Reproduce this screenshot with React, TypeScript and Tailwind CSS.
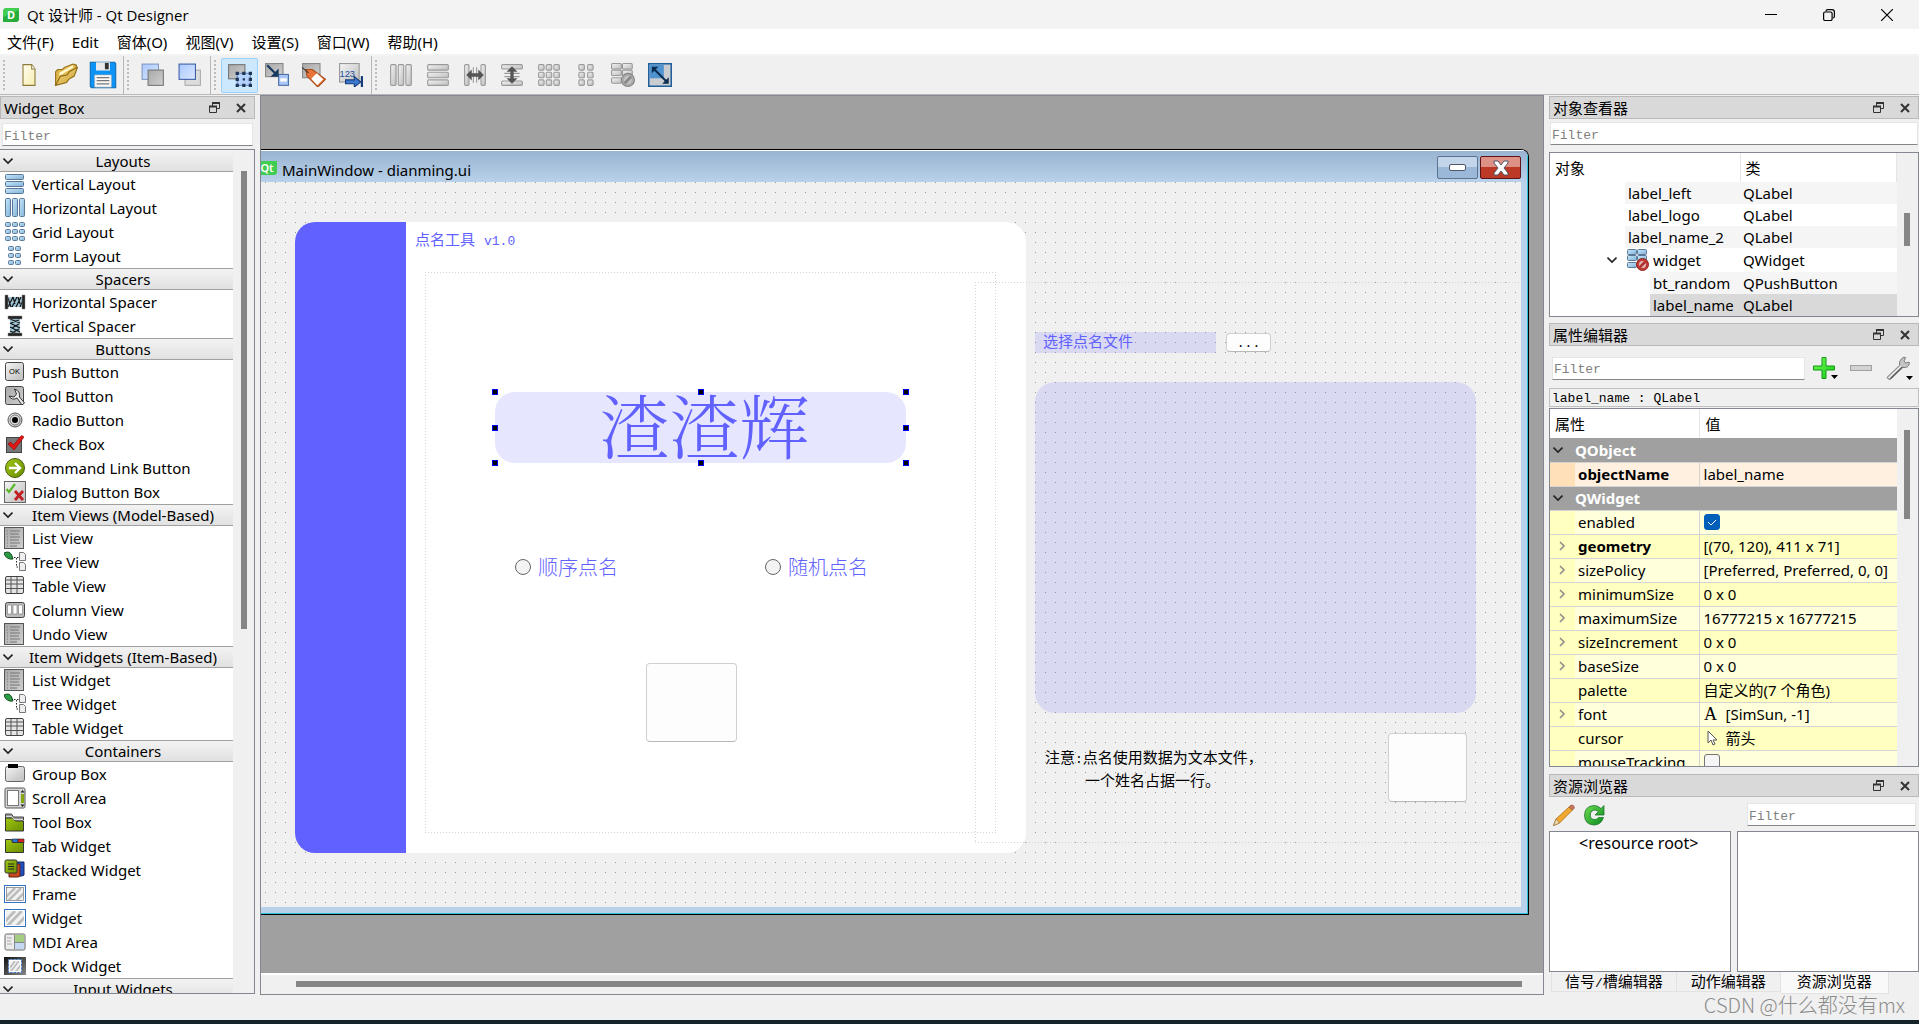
import { ReactNode } from "react";
import clsx from "clsx";

interface WidgetGroup {
  title: string;
  items: [icon: string, label: string][];
}

interface Property {
  name: string;
  value?: ReactNode;
  bold?: boolean;
  expandable?: boolean;
  tone: "header" | "object" | "light" | "dark";
}

const MONO = "font-['Liberation_Mono','Noto_Sans_CJK_SC',monospace]";

const menus = ["文件(F)", "Edit", "窗体(O)", "视图(V)", "设置(S)", "窗口(W)", "帮助(H)"];

const toolGroups: [icon: string, label: string][][] = [
  [["new", "New"], ["open", "Open"], ["save", "Save"]],
  [["lower", "Send to back"], ["raise", "Bring to front"]],
  [["editWidgets", "Edit widgets"], ["editSignals", "Edit signals"], ["editBuddies", "Edit buddies"], ["editTabs", "Edit tab order"]],
  [
    ["hGray", "Lay out horizontally"],
    ["vGray", "Lay out vertically"],
    ["hSplit", "Horizontal splitter"],
    ["vSplit", "Vertical splitter"],
    ["gridGray", "Lay out in a grid"],
    ["formGray", "Lay out in a form"],
    ["breakGray", "Break layout"],
    ["adjust", "Adjust size"],
  ],
];

const widgetGroups: WidgetGroup[] = [
  { title: "Layouts", items: [["vertical", "Vertical Layout"], ["horizontal", "Horizontal Layout"], ["grid", "Grid Layout"], ["form", "Form Layout"]] },
  { title: "Spacers", items: [["hSpacer", "Horizontal Spacer"], ["vSpacer", "Vertical Spacer"]] },
  {
    title: "Buttons",
    items: [
      ["push", "Push Button"],
      ["tool", "Tool Button"],
      ["radio", "Radio Button"],
      ["check", "Check Box"],
      ["command", "Command Link Button"],
      ["dialog", "Dialog Button Box"],
    ],
  },
  {
    title: "Item Views (Model-Based)",
    items: [["list", "List View"], ["tree", "Tree View"], ["table", "Table View"], ["column", "Column View"], ["list", "Undo View"]],
  },
  { title: "Item Widgets (Item-Based)", items: [["list", "List Widget"], ["tree", "Tree Widget"], ["table", "Table Widget"]] },
  {
    title: "Containers",
    items: [
      ["group", "Group Box"],
      ["scroll", "Scroll Area"],
      ["toolbox", "Tool Box"],
      ["tab", "Tab Widget"],
      ["stacked", "Stacked Widget"],
      ["frame", "Frame"],
      ["widget", "Widget"],
      ["mdi", "MDI Area"],
      ["dock", "Dock Widget"],
    ],
  },
  { title: "Input Widgets", items: [] },
];

const properties: Property[] = [
  { name: "QObject", tone: "header" },
  { name: "objectName", value: "label_name", bold: true, tone: "object" },
  { name: "QWidget", tone: "header" },
  { name: "enabled", value: <CheckBox label="enabled" checked />, tone: "light" },
  { name: "geometry", value: "[(70, 120), 411 x 71]", bold: true, expandable: true, tone: "dark" },
  { name: "sizePolicy", value: "[Preferred, Preferred, 0, 0]", expandable: true, tone: "light" },
  { name: "minimumSize", value: "0 x 0", expandable: true, tone: "dark" },
  { name: "maximumSize", value: "16777215 x 16777215", expandable: true, tone: "light" },
  { name: "sizeIncrement", value: "0 x 0", expandable: true, tone: "dark" },
  { name: "baseSize", value: "0 x 0", expandable: true, tone: "light" },
  { name: "palette", value: "自定义的(7 个角色)", tone: "dark" },
  {
    name: "font",
    value: (
      <span className="flex items-center gap-2">
        <span className="w-[14px] text-center font-['Liberation_Serif',serif] text-lg leading-5">A</span>[SimSun, -1]
      </span>
    ),
    expandable: true,
    tone: "light",
  },
  {
    name: "cursor",
    value: (
      <span className="flex items-center gap-2">
        <svg viewBox="0 0 14 18" className="h-[18px] w-[14px]">
          <path d="M4 2v12l3-3 2 5 2-1-2-4h4z" fill="#fff" stroke="#555" />
        </svg>
        箭头
      </span>
    ),
    tone: "dark",
  },
  { name: "mouseTracking", value: <CheckBox label="mouseTracking" />, tone: "light" },
];

export default function App() {
  return (
    <div className="relative flex h-screen flex-col overflow-hidden bg-[#f0f0f0] font-['Noto_Sans','Noto_Sans_CJK_SC',sans-serif] text-[15px] leading-5 text-black">
      <Gradients />
      <TitleBar />
      <nav className="flex h-[27px] shrink-0 items-center gap-[18px] border-b-2 border-[#f3f3f3] bg-white pl-[7px]">
        {menus.map((m) => (
          <button key={m} className="whitespace-nowrap">{m}</button>
        ))}
      </nav>
      <Toolbar />
      <main className="flex min-h-0 flex-1">
        <WidgetBox />
        <Workspace />
        <aside className="flex w-[370px] shrink-0 flex-col pb-px">
          <ObjectInspector />
          <PropertyEditor />
          <ResourceBrowser />
        </aside>
      </main>
      <footer className="h-[29px] shrink-0 border-b-4 border-[#15232b]" />
      <p className="absolute right-[14px] bottom-[5px] font-['Noto_Sans_CJK_SC',sans-serif] text-[20px] leading-7 font-light text-[#8c8c8c]">
        CSDN @什么都没有mx
      </p>
    </div>
  );
}

function TitleBar() {
  return (
    <header className="flex h-[29px] shrink-0 items-center bg-[#f3f3f3] pr-[3px] pl-[3px]">
      <svg viewBox="0 0 16 14" className="h-[14px] w-4">
        <path d="M2 0h14v12l-2 2H0V2z" fill="#41cd52" />
        <path d="M0 14V9l16-7v10l-2 2z" fill="#27ad3b" />
        <text x="8" y="11" fontSize="11" fontWeight="700" textAnchor="middle" fill="#fff">D</text>
      </svg>
      <h1 className="ml-2 flex-1 font-['Open_Sans','Noto_Sans_CJK_SC',sans-serif]">Qt 设计师 - Qt Designer</h1>
      <button aria-label="Minimize" className="flex w-[58px] justify-center">
        <svg viewBox="0 0 12 12" className="h-3 w-3"><path d="M0 5.500h12" stroke="#000" /></svg>
      </button>
      <button aria-label="Restore" className="flex w-[58px] justify-center">
        <svg viewBox="0 0 12 12" className="h-3 w-3" fill="none" stroke="#000" strokeWidth="1.200">
          <rect x="0.600" y="3" width="8.500" height="8.500" rx="1.500" />
          <path d="M3 2.600V2Q3.200.6 4.600.6H9Q11.400.6 11.400 3v4.500Q11.400 9 9.600 9" />
        </svg>
      </button>
      <button aria-label="Close" className="flex w-[58px] justify-center">
        <svg viewBox="0 0 12 12" className="h-3 w-3"><path d="M0 0l12 12M12 0L0 12" stroke="#000" strokeWidth="1.200" /></svg>
      </button>
    </header>
  );
}

function Toolbar() {
  return (
    <div className="flex h-[39px] shrink-0 border-b border-[#b8b8b8]">
      {toolGroups.map((group, i) => (
        <div key={i} className={clsx("flex items-center pr-[2px]", i < 3 && "border-r border-[#b8b8b8]")}>
          <span className="ml-[3px] h-[30px] w-0 border-l-2 border-dotted border-[#bdbdbd]" />
          <span className="w-[5px]" />
          {group.map(([icon, label]) => (
            <button
              key={icon}
              aria-label={label}
              className={clsx(
                "flex h-[35px] w-[37px] items-center justify-center rounded-xs border",
                icon === "editWidgets" ? "border-[#99d1ff] bg-[#cce8ff]" : "border-transparent",
              )}
            >
              <Icon name={icon} className={icon === "save" ? "h-7 w-7" : "h-6 w-6"} />
            </button>
          ))}
        </div>
      ))}
    </div>
  );
}

function WidgetBox() {
  return (
    <aside className="flex w-[260px] shrink-0 flex-col pr-[5px] pb-px">
      <DockTitle title="Widget Box" />
      <div className="px-[2px] pt-1 pb-[3px]">
        <Filter label="Filter widgets" />
      </div>
      <div className="flex min-h-0 flex-1 border-y border-r border-[#828790]">
        <div className="min-w-0 flex-1 overflow-hidden bg-white">
          {widgetGroups.map((group, i) => (
            <section key={group.title}>
              <button
                className={clsx(
                  "flex h-[22px] w-full items-center border-b border-[#a0a0a0] bg-linear-to-b from-[#f3f3f3] to-[#e1e1e1] pl-[3px]",
                  i > 0 && "border-t",
                )}
              >
                <Chevron />
                <span className="flex-1 text-center">{group.title}</span>
              </button>
              <ul>
                {group.items.map(([icon, label]) => (
                  <li key={label} className="flex h-6 items-center gap-[6px] pl-1">
                    <Icon name={icon} className="h-[22px] w-[22px]" />
                    {label}
                  </li>
                ))}
              </ul>
            </section>
          ))}
        </div>
        <div className="w-[21px] pt-[21px] pl-2">
          <div className="h-[458px] w-[6px] bg-[#868686]" />
        </div>
      </div>
    </aside>
  );
}

function Workspace() {
  return (
    <section className="mr-[5px] flex min-w-0 flex-1 flex-col border border-[#828790] bg-[#a0a0a0]">
      <div className="flex min-h-0 flex-1 pt-[53px] pr-[14px] pb-[58px]">
        <div className="flex flex-1 flex-col overflow-hidden rounded-tr-lg border-t border-r border-b border-black">
          <div className="flex min-h-0 flex-1 flex-col border-t border-r border-b border-t-white border-r-[#2cbfd8] border-b-[#2cbfd8] bg-[#b9d1ea]">
            <div className="flex h-[31px] shrink-0 items-center gap-[2px] bg-linear-to-b from-[#99b4d1] to-[#b9d1ea] pt-[2px] pr-[6px]">
              <svg viewBox="0 0 16 14" className="h-[14px] w-4">
                <path d="M0 0h16v12l-2 2H0z" fill="#41cd52" />
                <text x="6" y="11" fontSize="11" fontWeight="600" textAnchor="middle" fill="#fff">Qt</text>
              </svg>
              <h2 className="ml-[3px] flex-1 pt-1">MainWindow - dianming.ui</h2>
              <button aria-label="Minimize form" className="flex h-[23px] w-[41px] items-center justify-center rounded-xs border border-[#5b7290] bg-linear-to-b from-[#c3d5ea] from-50% to-[#9bb8d8] to-50%">
                <span className="h-[7px] w-[17px] rounded-xs border border-[#535666] bg-white" />
              </button>
              <button aria-label="Close form" className="flex h-[23px] w-[41px] items-center justify-center rounded-xs border border-[#5c1418] bg-linear-to-b from-[#dd9187] from-45% to-[#bc3a25] to-50%">
                <svg viewBox="0 0 18 16" className="h-4 w-[18px]">
                  <path d="M2 1h4l3 4 3-4h4v2l-4 5 4 5v2h-4l-3-4-3 4H2v-2l4-5-4-5z" fill="#fff" stroke="#535666" />
                </svg>
              </button>
            </div>
            <FormCanvas />
          </div>
        </div>
      </div>
      <div className="h-[21px] shrink-0 border-t-2 border-white bg-[#f0f0f0] pt-[6px] pr-[21px] pl-[35px]">
        <div className="h-[6px] bg-[#868686]" />
      </div>
    </section>
  );
}

// The form under edit: every child sits at its own geometry on a 10px grid.
function FormCanvas() {
  return (
    <div className="relative mr-[6px] mb-[6px] flex-1 overflow-hidden bg-[#f0f0f0] bg-[conic-gradient(from_270deg_at_1px_1px,#999_90deg,transparent_0)] bg-size-[10px_10px] bg-position-[4px_0px] text-[#6161ff]">
      <div className="absolute top-[40px] left-[34px] h-[631px] w-[731px] overflow-hidden rounded-[20px] bg-white">
        <div className="h-full w-[111px] bg-[#6161ff]" />
      </div>
      <p className={clsx("absolute top-[48px] left-[154px] leading-6", MONO)}>
        点名工具 <span className="text-[13px]">v1.0</span>
      </p>
      <Outline className="top-[90px] left-[164px] h-[561px] w-[571px]" />
      <Outline className="top-[100px] left-[714px] h-[561px] w-[600px]" />

      <div className="absolute top-[210px] left-[234px] flex h-[71px] w-[411px] items-center justify-center rounded-[20px] bg-[#6161ff]/16 pb-2 pl-2 font-['Noto_Serif_CJK_SC','Noto_Sans_CJK_SC',serif] text-[70px] leading-none font-light">
        渣渣辉
      </div>
      <div className="absolute top-[207px] left-[231px] grid h-[77px] w-[417px] grid-cols-3 content-between">
        {["justify-self-start", "justify-self-center", "justify-self-end"].map((side) => (
          <Handle key={side} className={side} />
        ))}
        <Handle className="justify-self-start" />
        <Handle className="col-start-3 justify-self-end" />
        {["justify-self-start", "justify-self-center", "justify-self-end"].map((side) => (
          <Handle key={side} className={side} />
        ))}
      </div>

      <RadioOption label="顺序点名" className="top-[373px] left-[254px]" />
      <RadioOption label="随机点名" className="top-[373px] left-[504px]" />
      <button aria-label="bt_random" className="absolute top-[481px] left-[385px] h-[79px] w-[91px] rounded-sm border border-[#d0d0d0] border-b-[#b8b8b8] bg-[#fdfdfd]" />

      <p className={clsx("absolute top-[150px] left-[774px] h-[21px] w-[181px] bg-[#6161ff]/16 pl-2 leading-6", MONO)}>选择点名文件</p>
      <button className={clsx("absolute top-[151px] left-[965px] h-[19px] w-[45px] rounded-sm border border-[#d0d0d0] border-b-[#b8b8b8] bg-[#fdfdfd] text-[13px] leading-5 text-black", MONO)}>
        ...
      </button>
      <div className="absolute top-[200px] left-[774px] h-[331px] w-[441px] rounded-[20px] bg-[#6161ff]/16" />
      <p className={clsx("absolute top-[566px] left-[784px] leading-[23px] text-black", MONO)}>
        注意<span className="text-[13px]">:</span>点名使用数据为文本文件，
        <span className="block pl-10">一个姓名占据一行。</span>
      </p>
      <button aria-label="bt_start" className="absolute top-[551px] left-[1127px] h-[69px] w-[79px] rounded-sm border border-[#d0d0d0] border-b-[#b8b8b8] bg-[#fdfdfd]" />
    </div>
  );
}

function Outline({ className }: { className: string }) {
  return (
    <div
      className={clsx(
        "absolute bg-[repeating-linear-gradient(90deg,#d4d4d4_0_1px,transparent_1px_3px),repeating-linear-gradient(90deg,#d4d4d4_0_1px,transparent_1px_3px),repeating-linear-gradient(180deg,#d4d4d4_0_1px,transparent_1px_3px),repeating-linear-gradient(180deg,#d4d4d4_0_1px,transparent_1px_3px)] bg-size-[100%_1px,100%_1px,1px_100%,1px_100%] bg-position-[top,bottom,left,right] bg-no-repeat",
        className,
      )}
    />
  );
}

function Handle({ className }: { className: string }) {
  return <span className={clsx("h-[6px] w-[6px] border border-[#0000ff] bg-black", className)} />;
}

function RadioOption({ label, className }: { label: string; className: string }) {
  return (
    <label className={clsx("absolute flex items-center gap-[7px] font-['Noto_Sans_CJK_SC',sans-serif] text-xl leading-6 font-light", className)}>
      <input type="radio" name="order" className="h-4 w-4 appearance-none rounded-full border border-[#666] bg-[#f3f3f3]" />
      {label}
    </label>
  );
}

function ObjectInspector() {
  const rows: [string, string, boolean][] = [
    ["label_left", "QLabel", true],
    ["label_logo", "QLabel", false],
    ["label_name_2", "QLabel", true],
  ];
  return (
    <section>
      <DockTitle title="对象查看器" />
      <div className="px-px pt-[3px] pb-[2px]">
        <Filter label="Filter objects" />
      </div>
      <div className="mt-[5px] flex h-[165px] overflow-hidden border border-[#828790] bg-white">
        <div className="min-w-0 flex-1">
          <table className="w-full table-fixed border-collapse text-left">
            <colgroup>
              <col className="w-[190px]" />
              <col />
            </colgroup>
            <thead>
              <tr className="h-[29px]">
                <th className="border-r border-[#e5e5e5] pl-[5px] font-normal">对象</th>
                <th className="border-r border-[#e5e5e5] pl-[5px] font-normal">类</th>
              </tr>
            </thead>
            <tbody>
              {rows.map(([name, cls, striped]) => (
                <tr key={name}>
                  <td className="p-0 pl-[75px]"><div className={clsx("h-[22px] pl-[3px] leading-[22px]", striped && "bg-[#f5f5f5]")}>{name}</div></td>
                  <td className={clsx("p-0 pl-[3px]", striped && "bg-[#f5f5f5]")}>{cls}</td>
                </tr>
              ))}
              <tr className="h-6">
                <td className="p-0">
                  <div className="flex items-center pl-[57px]">
                    <Chevron />
                    <Icon name="breakRed" className="mr-1 ml-[10px] h-[22px] w-[22px]" />
                    widget
                  </div>
                </td>
                <td className="p-0 pl-[3px]">QWidget</td>
              </tr>
              <tr>
                <td className="p-0 pl-[100px]"><div className="h-[22px] bg-[#f5f5f5] pl-[3px] leading-[22px]">bt_random</div></td>
                <td className="bg-[#f5f5f5] p-0 pl-[3px]">QPushButton</td>
              </tr>
              <tr>
                <td className="p-0 pl-[100px]"><div className="h-[22px] bg-[#d9d9d9] pl-[3px] leading-[22px]">label_name</div></td>
                <td className="bg-[#d9d9d9] p-0 pl-[3px]">QLabel</td>
              </tr>
            </tbody>
          </table>
        </div>
        <div className="w-[21px] bg-[#f0f0f0] pt-[60px] pl-[7px]">
          <div className="h-[33px] w-[6px] bg-[#868686]" />
        </div>
      </div>
    </section>
  );
}

function PropertyEditor() {
  return (
    <section className="flex min-h-0 flex-1 flex-col pt-[5px]">
      <DockTitle title="属性编辑器" />
      <div className="flex h-[42px] shrink-0 items-center pt-[2px] pl-[3px]">
        <div className="flex-1"><Filter label="Filter properties" /></div>
        <button aria-label="Add dynamic property" className="flex w-[37px] items-end pl-2">
          <Icon name="plus" className="h-[22px] w-[22px]" />
          <Caret />
        </button>
        <button aria-label="Remove dynamic property" className="flex w-[37px] pl-2">
          <Icon name="minus" className="h-[22px] w-[22px]" />
        </button>
        <button aria-label="Configure property editor" className="flex w-[40px] items-end pl-[7px]">
          <Icon name="wrench" className="h-6 w-6" />
          <Caret />
        </button>
      </div>
      <p className={clsx("h-[19px] shrink-0 border border-[#c0c0c0] pl-[2px] text-[13px] leading-5", MONO)}>label_name : QLabel</p>
      <div className="mt-px flex min-h-0 flex-1 overflow-hidden border border-[#828790]">
        <div className="min-w-0 flex-1 overflow-hidden bg-white">
          <table className="w-full table-fixed border-collapse text-left">
            <colgroup>
              <col className="w-[25px]" />
              <col className="w-[124px]" />
              <col />
            </colgroup>
            <thead>
              <tr className="h-[29px]">
                <th colSpan={2} className="border-r border-[#e5e5e5] pl-[5px] font-normal">属性</th>
                <th className="pl-[6px] font-normal">值</th>
              </tr>
            </thead>
            <tbody>
              {properties.map((p) => (
                <PropertyRow key={p.name} property={p} />
              ))}
            </tbody>
          </table>
        </div>
        <div className="w-[21px] bg-[#f0f0f0] pt-[21px] pl-[7px]">
          <div className="h-[89px] w-[6px] bg-[#868686]" />
        </div>
      </div>
    </section>
  );
}

function PropertyRow({ property: p }: { property: Property }) {
  if (p.tone === "header") {
    return (
      <tr className="h-6 border-b border-[#d4d4d4] bg-[#a0a0a0] font-bold text-white">
        <td className="p-0 pl-[3px] text-black"><Chevron /></td>
        <td colSpan={2} className="p-0">{p.name}</td>
      </tr>
    );
  }
  return (
    <tr
      className={clsx("h-6 border-b border-[#d4d4d4]", {
        "bg-[#fff0e0]": p.tone === "object",
        "bg-[#ffffdc]": p.tone === "light",
        "bg-[#ffffbf]": p.tone === "dark",
      })}
    >
      <td className={clsx("p-0 pl-2", p.tone === "object" ? "bg-[#ffe0b8]" : "bg-[#ffffbf]")}>
        {p.expandable && (
          <svg viewBox="0 0 8 10" className="h-[10px] w-2"><path d="M2 1l4 4-4 4" fill="none" stroke="#888" strokeWidth="1.500" /></svg>
        )}
      </td>
      <td className={clsx("border-r border-[#d4d4d4] p-0 pl-[3px]", p.bold && "font-bold")}>{p.name}</td>
      <td className="p-0 pl-1 whitespace-nowrap">{p.value}</td>
    </tr>
  );
}

function ResourceBrowser() {
  return (
    <section className="pt-[6px]">
      <DockTitle title="资源浏览器" />
      <div className="flex h-[34px] items-center gap-2 pt-px pr-[3px] pl-1">
        <button aria-label="Edit resources"><Icon name="pencil" className="h-[22px] w-[22px]" /></button>
        <button aria-label="Reload"><Icon name="reload" className="h-[22px] w-[22px]" /></button>
        <div className="ml-auto w-[169px]"><Filter label="Filter resources" /></div>
      </div>
      <div className="grid grid-cols-2 gap-[6px]">
        <div className="h-[141px] border border-[#828790] bg-white pt-px pl-[29px] text-base leading-5">&lt;resource root&gt;</div>
        <div className="h-[141px] border border-[#828790] bg-white" />
      </div>
      <div role="tablist" className={clsx("flex h-[22px] items-start pl-[2px]", MONO)}>
        <button role="tab" className="h-5 border border-t-0 border-[#e2e2e2] px-[13px] leading-6">
          信号<span className="text-[13px]">/</span>槽编辑器
        </button>
        <button role="tab" className="h-5 border border-t-0 border-l-0 border-[#e2e2e2] px-[14px] leading-6">动作编辑器</button>
        <button role="tab" aria-selected className="h-[22px] border border-t-0 border-l-0 border-[#e2e2e2] bg-[#f9f9f9] px-4 leading-6">资源浏览器</button>
      </div>
    </section>
  );
}

function DockTitle({ title }: { title: string }) {
  return (
    <div className="mt-px flex h-[23px] shrink-0 items-center border border-[#b8b8b8] bg-[#d9d9d9] pr-[8px] pl-[3px]">
      <h2 className="flex-1">{title}</h2>
      <button aria-label={`Float ${title}`}>
        <svg viewBox="0 0 11 11" className="h-[11px] w-[11px]" fill="none" stroke="#333">
          <path d="M3.500 4V1.500h7v5H8" />
          <path d="M3 1h8M0 4.500h8" strokeWidth="2" />
          <path d="M.5 4.500h7v6h-7z" />
        </svg>
      </button>
      <button aria-label={`Close ${title}`} className="ml-4">
        <svg viewBox="0 0 10 10" className="h-[10px] w-[10px]"><path d="M1 1l8 8M9 1L1 9" stroke="#333" strokeWidth="2" /></svg>
      </button>
    </div>
  );
}

function Filter({ label }: { label: string }) {
  return (
    <input
      aria-label={label}
      placeholder="Filter"
      className={clsx("block h-[23px] w-full border border-[#e5e5e5] border-b-[#868686] bg-white px-px pt-[3px] text-[13px] placeholder:text-[#808080]", MONO)}
    />
  );
}

function CheckBox({ label, checked }: { label: string; checked?: boolean }) {
  return (
    <span className="relative block h-4 w-4">
      <input
        type="checkbox"
        aria-label={label}
        defaultChecked={checked}
        className="block h-4 w-4 appearance-none rounded-[3px] border border-[#767676] bg-[#f5f5f5] checked:border-[#005fb8] checked:bg-[#005fb8]"
      />
      {checked && (
        <svg viewBox="0 0 16 16" className="pointer-events-none absolute inset-0"><path d="M4 8l3 3 5-5" fill="none" stroke="#fff" /></svg>
      )}
    </span>
  );
}

function Chevron() {
  return (
    <svg viewBox="0 0 10 10" className="h-[10px] w-[10px] shrink-0">
      <path d="M0.500 2.500L5 7l4.500-4.500" fill="none" stroke="#222" strokeWidth="1.600" />
    </svg>
  );
}

function Caret() {
  return <svg viewBox="0 0 7 4" className="-ml-1 h-1 w-[7px] shrink-0"><path d="M0 0h7L3.500 4z" /></svg>;
}

function Gradients() {
  const stops: [string, string, string][] = [
    ["blue", "#c8e8fa", "#82b2d8"],
    ["gray", "#f4f4f4", "#bdbdbd"],
    ["steel", "#a8a8a8", "#d0d0d0"],
    ["sky", "#a9c8ff", "#dce8fc"],
    ["paper", "#fffef0", "#f8edb0"],
    ["gold", "#f8e08a", "#c89b2c"],
    ["green", "#a0c814", "#6a8c00"],
    ["leaf", "#6edc50", "#0a8a20"],
    ["plus", "#7dfc5a", "#10c818"],
    ["dark", "#111111", "#888888"],
  ];
  return (
    <svg className="absolute h-0 w-0" aria-hidden="true">
      <defs>
        {stops.map(([id, from, to]) => (
          <linearGradient key={id} id={id} x1="0" y1="0" x2="1" y2="1">
            <stop offset="0" stopColor={from} />
            <stop offset="1" stopColor={to} />
          </linearGradient>
        ))}
      </defs>
    </svg>
  );
}

interface CellsProps {
  xs: number[];
  ys: number[];
  w: number;
  h: number;
  fill: string;
  stroke: string;
}

function Cells({ xs, ys, w, h, fill, stroke }: CellsProps) {
  return (
    <>
      {ys.map((y) => xs.map((x) => <rect key={`${x}-${y}`} x={x} y={y} width={w} height={h} rx="1" fill={fill} stroke={stroke} />))}
    </>
  );
}

const BLUE = { fill: "url(#blue)", stroke: "#5a7898" };
const GRAY = { fill: "url(#gray)", stroke: "#9a9a9a" };

function Hatch({ x, y, w, h }: { x: number; y: number; w: number; h: number }) {
  return (
    <svg x={x} y={y} width={w} height={h} viewBox="0 0 16 12" preserveAspectRatio="none">
      <rect width="16" height="12" fill="#f2f2f2" />
      <path d="M-2 10L8 0M0 14L14 0M8 14L20 2" stroke="#bcbcbc" strokeWidth="2.500" />
    </svg>
  );
}

const drawings: Record<string, ReactNode> = {
  vertical: <Cells xs={[1.5]} ys={[1.5, 8.5, 15.5]} w={18} h={5} {...BLUE} />,
  horizontal: <Cells xs={[1.5, 8.5, 15.5]} ys={[1.5]} w={5} h={18} {...BLUE} />,
  grid: <Cells xs={[1.5, 8.5, 15.5]} ys={[1.5, 8.5, 15.5]} w={5} h={4} {...BLUE} />,
  form: <Cells xs={[4.5, 11.5]} ys={[1.5, 8.5, 15.5]} w={5} h={4} {...BLUE} />,
  vGray: <Cells xs={[1.5]} ys={[1.5, 8.5, 15.5]} w={19} h={5} {...GRAY} />,
  hGray: <Cells xs={[1.5, 8.5, 15.5]} ys={[1.5]} w={5} h={19} {...GRAY} />,
  gridGray: <Cells xs={[1.5, 8.5, 15.5]} ys={[1.5, 8.5, 15.5]} w={5} h={5} {...GRAY} />,
  formGray: <Cells xs={[4.5, 12.5]} ys={[1.5, 8.5, 15.5]} w={5} h={5} {...GRAY} />,
  hSplit: (
    <>
      <Cells xs={[1.5, 16.5]} ys={[1.5]} w={4} h={19} {...GRAY} />
      <path d="M9.500 4v14M12.500 4v14" stroke="#999" />
      <path d="M3 11l5-5v3.500h6V6l5 5-5 5v-3.500H8V16z" fill="#555" />
    </>
  ),
  vSplit: (
    <>
      <Cells xs={[1.5]} ys={[1.5, 16.5]} w={19} h={4} {...GRAY} />
      <path d="M4 9.500h14M4 12.500h14" stroke="#999" />
      <path d="M11 3l5 5h-3.500v6H16l-5 5-5-5h3.500V8H6z" fill="#555" />
    </>
  ),
  breakGray: (
    <>
      <Cells xs={[0.5, 10.5]} ys={[0.5, 6.5, 13.5]} w={9} h={5} {...GRAY} />
      <circle cx="15.500" cy="15.500" r="6" fill="#aaa" stroke="#888" />
      <circle cx="15.500" cy="15.500" r="3.500" fill="#c4c4c4" />
      <path d="M12.500 18.500l6-6" stroke="#888" strokeWidth="2.500" />
    </>
  ),
  breakRed: (
    <>
      <Cells xs={[0.5, 10.5]} ys={[0.5, 6.5, 13.5]} w={9} h={5} {...BLUE} />
      <circle cx="15.500" cy="15.500" r="6" fill="#c43a36" stroke="#8c2522" />
      <circle cx="15.500" cy="15.500" r="3.500" fill="#e0bcb8" />
      <path d="M12.500 18.500l6-6" stroke="#b0322e" strokeWidth="2.500" />
    </>
  ),
  new: (
    <>
      <path d="M5.500 1.500h8l3 4v15h-11z" fill="url(#paper)" stroke="#8c7b36" />
      <path d="M13.500 1.500v4h3" fill="#fff" stroke="#8c7b36" />
    </>
  ),
  open: (
    <>
      <path d="M1.500 20V8l2-2h4l2-2 8-3 3 1v4L9 14z" fill="#e0b84a" stroke="#8f6c17" />
      <path d="M5 9l12-7 1 2L5 12z" fill="#fff7d0" />
      <path d="M1.500 20.500L6 12l6-1 2-3 7.500-4-3 8-5 3-2 3z" fill="url(#gold)" stroke="#8f6c17" />
    </>
  ),
  save: (
    <>
      <path d="M1 1h19l1 1v19H2l-1-1z" fill="#0c93f5" stroke="#0e69b0" strokeWidth=".8" />
      <path d="M5.500 1h11v6.500h-11z" fill="#e9e9e9" />
      <path d="M12.500 1.500h3v5h-3z" fill="#333" />
      <path d="M4.500 11h13v9.500h-13z" fill="#fafafa" stroke="#bbb" strokeWidth=".5" />
      <path d="M6 13h10M6 15.500h10M6 18h10" stroke="#777" />
    </>
  ),
  lower: (
    <>
      <rect x="1" y="1" width="15" height="14" fill="url(#sky)" stroke="#8298c0" />
      <rect x="6.500" y="6.500" width="14" height="14" fill="url(#steel)" stroke="#777" />
    </>
  ),
  raise: (
    <>
      <rect x="6.500" y="6.500" width="14" height="14" fill="#dcdcdc" stroke="#aaa" />
      <rect x="1" y="1" width="15" height="14" fill="url(#sky)" stroke="#3c5fa8" />
    </>
  ),
  editWidgets: (
    <>
      <rect x="0.500" y="1.500" width="15" height="13" fill="url(#steel)" stroke="#777" />
      <rect x="8.500" y="9.500" width="12" height="11" fill="#b5d2ff" stroke="#6c8fc4" />
      <path d="M7 8h3v3H7zM13 8h3v3h-3zM19 8h3v3h-3zM7 13.500h3v3H7zM19 13.500h3v3h-3zM7 19h3v3H7zM13 19h3v3h-3zM19 19h3v3h-3zM13.500 14h2v2h-2z" fill="#1f3557" />
    </>
  ),
  editSignals: (
    <>
      <rect x="0.500" y="0.500" width="16" height="12" fill="url(#steel)" stroke="#888" />
      <rect x="12.500" y="10.500" width="9" height="10" fill="#a8c6f8" stroke="#4d6fa8" />
      <path d="M14 15.500h6" stroke="#fff" strokeWidth="3" />
      <path d="M2 2l8 8" stroke="#173a60" strokeWidth="2" />
      <path d="M12.500 12.500H5l7.500-7.500z" fill="#173a60" />
    </>
  ),
  editBuddies: (
    <>
      <rect x="0.500" y="0.500" width="16" height="13" fill="url(#steel)" stroke="#888" />
      <path d="M3.500 6h6l12 9-7 7-10-10z" fill="#e8743a" stroke="#a84a18" />
      <path d="M13.500 9.500l6 5.500-5.500 5.500-5.500-6z" fill="#fff" />
      <path d="M0 4l6 5" stroke="#333" />
    </>
  ),
  editTabs: (
    <>
      <rect x="0.500" y="0.500" width="18" height="17" fill="url(#gray)" stroke="#999" />
      <text x="0.500" y="13" fontSize="8.500" fill="#2050a0" fontFamily="Liberation Sans">123</text>
      <path d="M6 15.500h8v-3l6 5-6 4.500v-3H6z" fill="#3b78d0" stroke="#173a78" />
      <path d="M21 12v10" stroke="#173a78" strokeWidth="2" />
    </>
  ),
  adjust: (
    <>
      <rect x="0.700" y="0.700" width="20.600" height="20.600" fill="#c9cdd2" stroke="#1f5f9c" strokeWidth="1.400" />
      <rect x="1.500" y="1.500" width="13" height="12.500" fill="#4f93d0" />
      <path d="M5 5l12 12" stroke="#0b2c50" strokeWidth="1.800" />
      <path d="M3.500 3.500h6l-6 6zM19 19h-6l6-6z" fill="#0b2c50" />
    </>
  ),
  hSpacer: (
    <>
      <path d="M3 6h16v10H3z" fill="#9cc4d4" />
      <path d="M4 16l5-10M8 16l5-10M12 16l5-10M16 16l3-7M4 7l3 9M9 6l2 7M14 6l2 7" stroke="#151515" strokeWidth="1.200" />
      <path d="M1 4h3v14H1zM18 4h3v14h-3z" fill="#222" stroke="#888" strokeWidth=".5" />
    </>
  ),
  vSpacer: (
    <>
      <path d="M6 3h10v16H6z" fill="#9cc4d4" />
      <path d="M6 4l10 4M6 8l10 5M6 12l10 5M6 16l7 3M15 5L7 8M15 9l-7 4M15 14l-7 4" stroke="#151515" strokeWidth="1.200" />
      <path d="M4 1h14v3H4zM4 18h14v3H4z" fill="#222" stroke="#888" strokeWidth=".5" />
    </>
  ),
  push: (
    <>
      <rect x="1.500" y="1.500" width="18" height="18" rx="2" fill="url(#gray)" stroke="#444" />
      <text x="10.500" y="12.500" fontSize="7.500" textAnchor="middle" fontFamily="Liberation Sans">OK</text>
    </>
  ),
  tool: (
    <>
      <rect x="1.500" y="1.500" width="18" height="18" rx="2" fill="url(#steel)" stroke="#444" />
      <path d="M5 11q3 5 8 2l5 7 2.500-2-5-6q1-6-5-8l2 5-2.500 3z" fill="#e8e8e8" stroke="#333" />
    </>
  ),
  radio: (
    <>
      <circle cx="11" cy="11" r="7" fill="url(#gray)" stroke="#555" />
      <circle cx="11" cy="11" r="5" fill="#ddd" stroke="#777" />
      <circle cx="11" cy="11" r="3" />
    </>
  ),
  check: (
    <>
      <rect x="2.500" y="4.500" width="15" height="15" fill="#777" stroke="#444" />
      <path d="M4 11l2.500-2 3 3 8-9.500L20 4 10 17z" fill="#e01818" stroke="#900" strokeWidth=".7" />
    </>
  ),
  command: (
    <>
      <circle cx="11" cy="11" r="9.500" fill="url(#green)" stroke="#4a5a10" />
      <path d="M5 11h10M11 6l5 5-5 5" fill="none" stroke="#fff" strokeWidth="2.400" />
    </>
  ),
  dialog: (
    <>
      <rect x="0.500" y="0.500" width="21" height="21" fill="url(#gray)" stroke="#666" />
      <path d="M2.500 8l2.500 3 6-8" fill="none" stroke="#5cb82c" strokeWidth="2.200" />
      <path d="M11 10l8 9M19 10l-8 9" stroke="#c01f24" strokeWidth="2.800" />
    </>
  ),
  list: (
    <>
      <rect x="0.500" y="0.500" width="19" height="21" fill="url(#steel)" stroke="#555" />
      <path d="M3 4h1M3 7h1M3 10h1M3 13h1M3 16h1M3 19h1M6 4h10M6 7h9M6 10h10M6 13h9M6 16h10M6 19h7" stroke="#777" />
    </>
  ),
  tree: (
    <>
      <path d="M0 2q6-3 8 3l1 3q-7 1-9-6z" fill="#2c9c44" stroke="#174d22" />
      <path d="M10 6.500h5M12.500 7v9h3" fill="none" stroke="#222" strokeDasharray="1.500 1.500" />
      <path d="M15.500 1.500h4l2 2v6h-6zM15.500 11.500h4l2 2v6h-6z" fill="#eee" stroke="#777" />
    </>
  ),
  table: (
    <>
      <rect x="1.500" y="1.500" width="18" height="17" rx="1.500" fill="#e4e4e4" stroke="#444" />
      <path d="M2 5h17M2 9h17M2 13.500h17M7 2v16M13 2v16" stroke="#555" />
    </>
  ),
  column: (
    <>
      <rect x="1.500" y="3.500" width="19" height="15" rx="2" fill="#bbb" stroke="#444" />
      <path d="M3.500 6h4v9h-4zM9 6h4v9H9zM14.500 6h4v9h-4z" fill="#fff" stroke="#777" strokeWidth=".6" />
    </>
  ),
  group: (
    <>
      <rect x="1.500" y="3.500" width="19" height="15" rx="2" fill="url(#gray)" stroke="#666" />
      <path d="M4 1h10v4H4z" />
    </>
  ),
  scroll: (
    <>
      <rect x="1" y="1" width="20" height="20" rx="1.500" fill="#d5d5d5" stroke="#555" />
      <rect x="3.500" y="3.500" width="11" height="15" fill="#fff" stroke="#777" />
      <path d="M17 7h3v9h-3z" fill="#86a80e" />
      <path d="M18.500 3l2 2.500h-4zM18.500 20l2-2.500h-4z" fill="#222" />
    </>
  ),
  toolbox: (
    <>
      <path d="M1.500 3h6l2 3h10v3h-18z" fill="#999" stroke="#444" />
      <path d="M1.500 7h7l3 3h8v10h-18z" fill="url(#green)" stroke="#333" />
      <path d="M2 5.500h6l2 3h9" fill="none" stroke="#ddd" />
    </>
  ),
  tab: (
    <>
      <path d="M8 4h6v4H8z" fill="#2c78d8" stroke="#222" strokeWidth=".6" />
      <path d="M14 4h6v4h-6z" fill="#d82222" stroke="#222" strokeWidth=".6" />
      <path d="M1.500 4.500h6l1 3h11v10h-18z" fill="url(#green)" stroke="#333" />
    </>
  ),
  stacked: (
    <>
      <path d="M10 3h10v13l-2 1h-8z" fill="#1f4fc0" stroke="#102860" />
      <path d="M5 5h11v12l-2 1H5z" fill="#c84820" stroke="#602010" />
      <rect x="1" y="1" width="12" height="13" rx="1.500" fill="url(#green)" stroke="#333" />
      <path d="M4 5h6M4 7.500h6M4 10h6" stroke="#222" />
    </>
  ),
  frame: (
    <>
      <rect x="0.500" y="2.500" width="21" height="17" fill="#fff" stroke="#2f73c4" />
      <rect x="2.500" y="4.500" width="17" height="13" fill="#fff" stroke="#5a5a5a" strokeWidth=".6" />
      <Hatch x={3} y={5} w={16} h={12} />
    </>
  ),
  widget: (
    <>
      <rect x="0.500" y="2.500" width="21" height="17" fill="#fff" stroke="#2f73c4" />
      <Hatch x={2} y={4} w={18} h={14} />
    </>
  ),
  mdi: (
    <>
      <rect x="1" y="3" width="20" height="16" rx="1.500" fill="#ececec" stroke="#666" />
      <path d="M3 7h5M3 10h4M3 13h5" stroke="#aaa" />
      <path d="M11 4h9v7h-9z" fill="#a5cf80" />
      <path d="M11 12h9v6h-9z" fill="#c4d8f4" />
      <path d="M10.500 4v14M11 11.500h9" stroke="#888" />
    </>
  ),
  dock: (
    <>
      <path d="M0 2h22v18H0z" fill="url(#dark)" />
      <rect x="4.500" y="4.500" width="13" height="13" fill="#fff" stroke="#3a78c8" strokeDasharray="2 1.500" />
      <Hatch x={6} y={6} w={10} h={10} />
    </>
  ),
  plus: <path d="M9 .5h4V9h8.500v4H13v8.500H9V13H.5V9H9z" fill="url(#plus)" stroke="#0e9a12" />,
  minus: <rect x="0.500" y="8.500" width="21" height="5" fill="#d2d2d2" stroke="#a0a0a0" />,
  wrench: (
    <>
      <path d="M1 19.500L12.500 8.500q-1-5 4-7.500l1.500.5-1.500 3 1.500 2 3-1 .5 1q-1 5-6 4L4 21.500q-2 .5-3-2z" fill="#c4c4c4" stroke="#6c6c6c" strokeWidth=".8" />
      <path d="M2.500 20L14 9" stroke="#f4f4f4" />
      <path d="M4 20.800L15 10" stroke="#555" />
    </>
  ),
  pencil: (
    <>
      <path d="M.5 21.500L3 15 16 3l3.500 3L6.500 19z" fill="#f0a830" stroke="#a86c10" strokeWidth=".8" />
      <path d="M.5 21.500L3 15l3.500 4z" fill="#f2dcb4" stroke="#8a6a3a" strokeWidth=".6" />
      <path d="M16 3l2-2q3-.5 3.500 3l-2 2z" fill="#c87860" stroke="#904830" strokeWidth=".6" />
    </>
  ),
  reload: (
    <path d="M21 1.500V11h-9l3.500-3.500Q10 4 7.500 9 6.500 15 11 15.500q3 .5 4.500-2h5Q18 21 11 21 1.500 20.500 1.500 11 2 2 11 1.500q4 0 7 3z" fill="url(#leaf)" stroke="#0c6a1c" strokeWidth=".7" />
  ),
};

function Icon({ name, className }: { name: string; className: string }) {
  return (
    <svg viewBox="0 0 22 22" fill="none" className={clsx("shrink-0", className)}>
      <g fill="#000">{drawings[name]}</g>
    </svg>
  );
}
